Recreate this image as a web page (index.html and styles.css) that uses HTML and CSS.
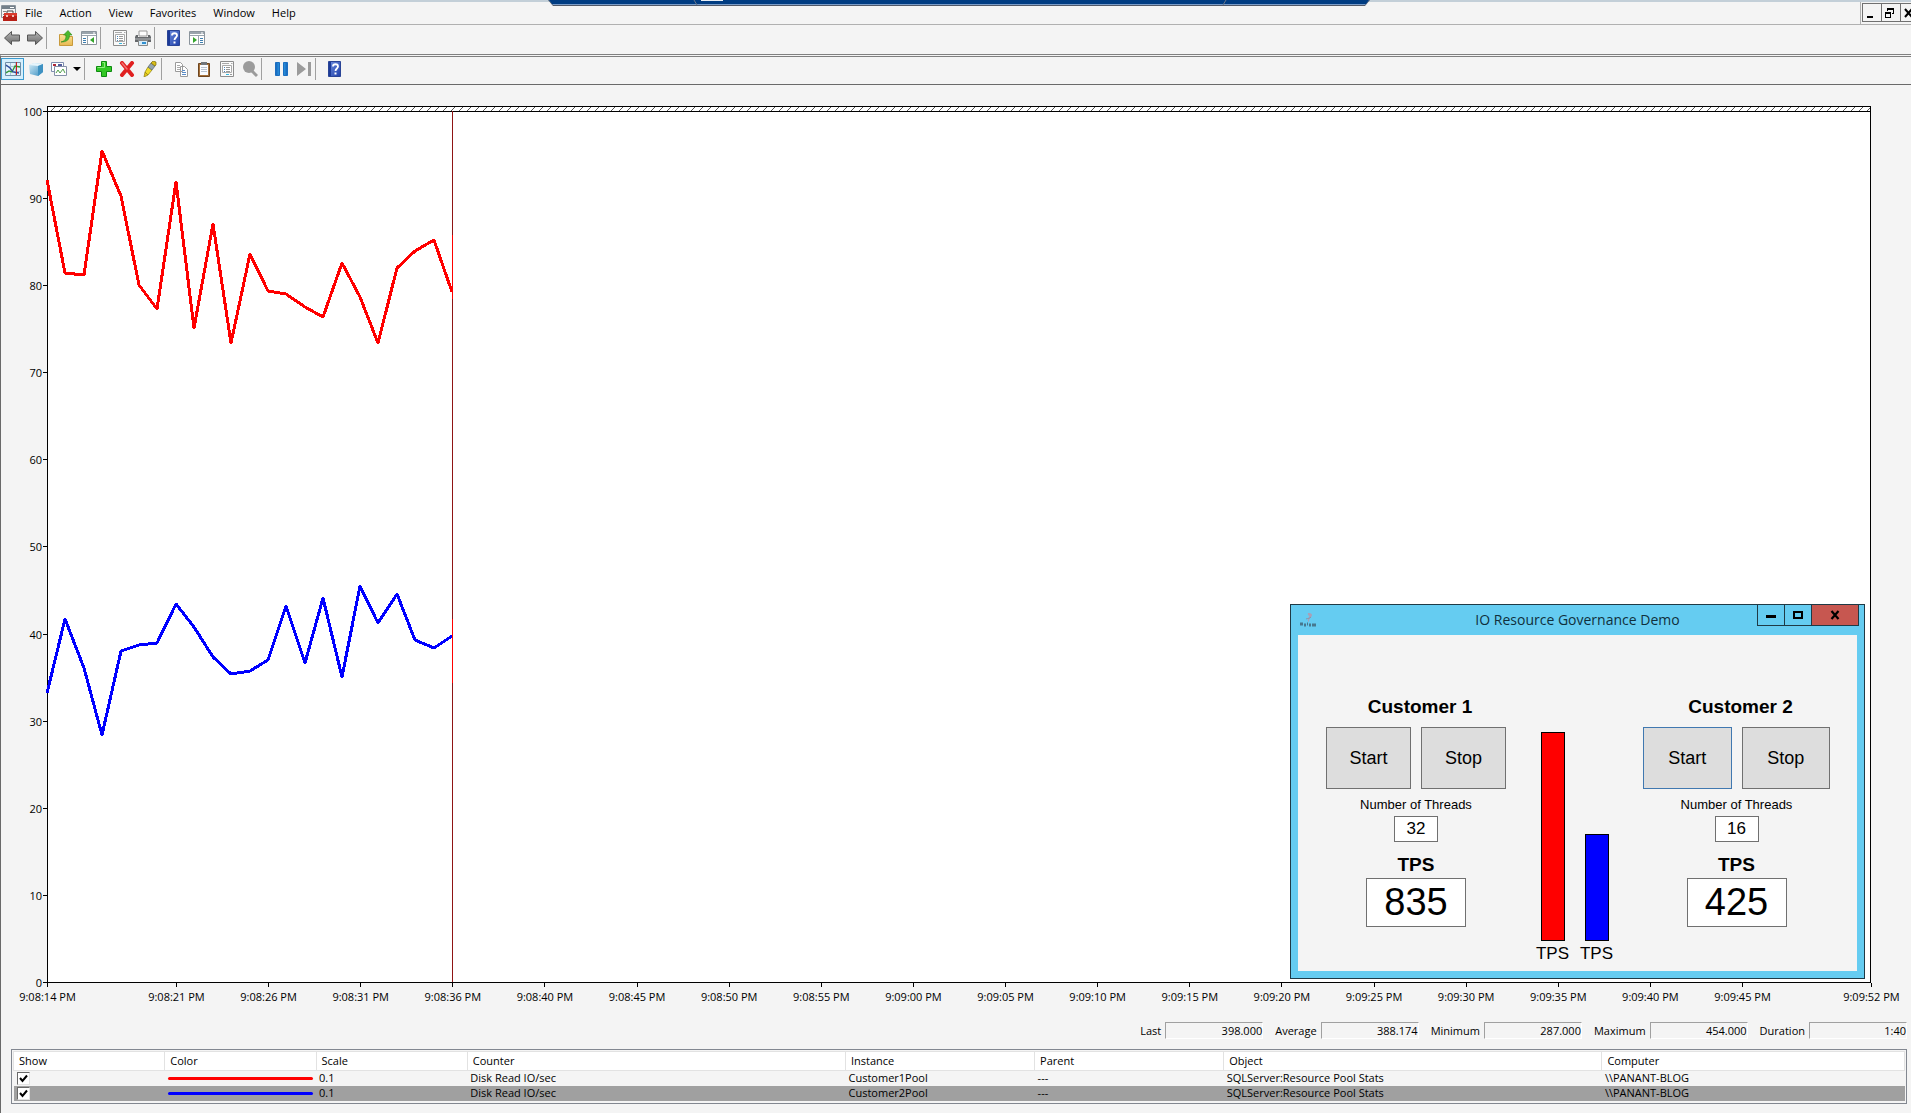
FILE: index.html
```html
<!DOCTYPE html>
<html lang="en">
<head>
<meta charset="utf-8">
<title>Performance Monitor</title>
<link rel="stylesheet" href="styles.css">
</head>
<body>
<svg class="defs" width="0" height="0" aria-hidden="true">
  <defs>
    <linearGradient id="g-grey" x1="0" y1="0" x2="0" y2="1"><stop offset="0" stop-color="#b5b5b5"/><stop offset="1" stop-color="#6a6a6a"/></linearGradient>
    <linearGradient id="g-help" x1="0" y1="0" x2="1" y2="1"><stop offset="0" stop-color="#6f8fe0"/><stop offset="1" stop-color="#1f3fa8"/></linearGradient>
    <linearGradient id="g-folder" x1="0" y1="0" x2="0" y2="1"><stop offset="0" stop-color="#fbe39a"/><stop offset="1" stop-color="#e8b850"/></linearGradient>
    <linearGradient id="g-cube" x1="0" y1="0" x2="1" y2="1"><stop offset="0" stop-color="#d5edf8"/><stop offset="1" stop-color="#3a8fc0"/></linearGradient>
    <linearGradient id="g-pause" x1="0" y1="0" x2="1" y2="0"><stop offset="0" stop-color="#1560b8"/><stop offset=".5" stop-color="#35b4f5"/><stop offset="1" stop-color="#1560b8"/></linearGradient>
    <symbol id="i-arrow" viewBox="0 0 16 16"><path d="M.5 8 7.500 1.500V5h8v6h-8v3.500z" fill="url(#g-grey)" stroke="#555"/></symbol>
    <symbol id="i-help" viewBox="0 0 16 16"><path d="M1.500.5h12v15h-12z" fill="url(#g-help)" stroke="#2a4496"/><path d="M2 1h2v14H2z" fill="#1c3a98"/><path d="M6 5.500C6 2.500 11 2.500 11 5.500 11 7.500 8.500 7.500 8.500 10" fill="none" stroke="#fff" stroke-width="1.800"/><path d="M7.500 11.500h2v2h-2z" fill="#fff"/></symbol>
    <symbol id="i-props" viewBox="0 0 16 16"><path d="M1.500.5h13v15h-13z" fill="#fafafa" stroke="#8d8d8d"/><path d="M3 2.500h7M12 2.500h1.500" stroke="#aaa"/><path d="M3.500 4.500h9v7h-9z" fill="#fff" stroke="#aaa"/><path d="M5 6.500h1M5 8.500h1M5 10.500h1" stroke="#4a83b8"/><path d="M7 6.500h4M7 8.500h4M7 10.500h4" stroke="#999"/><path d="M7 13.500h3" stroke="#35b8e0"/><path d="M11 13.500h2" stroke="#999"/></symbol>
    <symbol id="i-pane" viewBox="0 0 16 16"><path d="M.5 1.500h15v13H.5z" fill="#fff" stroke="#8b949c"/><path d="M1 2h14v2H1z" fill="#9aa4ac"/><path d="M12 3h2" stroke="#fff"/><path d="M1 5.500h14M6.500 6v8" stroke="#9aa4ac"/><path d="M2 8.500h3M2 10.500h3M2 12.500h3" stroke="#3e7fb0"/><path d="M13 7v6L9 10z" fill="#35a52c"/></symbol>
    <symbol id="i-pane-right" viewBox="0 0 16 16"><path d="M.5 1.500h15v13H.5z" fill="#fff" stroke="#8b949c"/><path d="M1 2h14v2H1z" fill="#9aa4ac"/><path d="M12 3h2" stroke="#fff"/><path d="M1 5.500h14M9.500 6v8" stroke="#9aa4ac"/><path d="M11 8.500h3M11 10.500h3M11 12.500h3" stroke="#3e7fb0"/><path d="M4 7v6l4-3z" fill="#35a52c"/></symbol>
  </defs>
</svg>

<svg class="session-bar" viewBox="0 0 822 6" aria-hidden="true">
  <path d="M0 0h822l-5 6H5z" fill="#505868"/>
  <path d="M1 0h820l-4 5H5z" fill="#7a9cc8"/>
  <path d="M1 0h820l-3 4H4z" fill="#003c82"/>
  <path d="m146 0 3 5M678 0l-3 5" stroke="#6b7686"/>
  <path d="M153 0h22v1h-22z" fill="#e8eef5"/>
</svg>

<header class="menubar">
  <svg class="icon" viewBox="0 0 16 16" aria-hidden="true"><path d="M.5.500h14v12H.5z" fill="#f4f4f4" stroke="#8b949c"/><path d="M1 1h13v3H1z" fill="#74808a"/><path d="M9 2.500h4" stroke="#fff"/><path d="M2 6.500h3M2 9.500h2" stroke="#888"/><path d="M6 8V6h6v2" fill="none" stroke="#444"/><path d="M3 8h13v3H3z" fill="#d83a2c"/><path d="M2 11h14v5H2z" fill="#b81f16"/><path d="M5 10h2v2H5zM11 10h2v2h-2z" fill="#f4c0b8"/></svg>
  <nav class="menus">
    <button type="button">File</button>
    <button type="button">Action</button>
    <button type="button">View</button>
    <button type="button">Favorites</button>
    <button type="button">Window</button>
    <button type="button">Help</button>
  </nav>
  <div class="mdi">
    <button type="button" aria-label="Minimize"><svg viewBox="0 0 16 16"><path d="M4 11h6v2H4z"/></svg></button>
    <button type="button" aria-label="Restore"><svg viewBox="0 0 16 16"><path d="M5 3h7v6h-2V8h1V5H6v1H5z"/><path d="M3 7h6v6H3zm1 2v3h4V9z" fill-rule="evenodd"/></svg></button>
    <button type="button" aria-label="Close"><svg viewBox="0 0 16 16"><path d="m4 4 7 8M11 4l-7 8" stroke="#000" stroke-width="2"/></svg></button>
  </div>
</header>

<div class="toolbar toolbar-main">
  <button type="button" aria-label="Back"><svg class="icon"><use href="#i-arrow"/></svg></button>
  <button type="button" aria-label="Forward"><svg class="icon flip"><use href="#i-arrow"/></svg></button>
  <i class="sep"></i>
  <button type="button" aria-label="Up one level"><svg class="icon" viewBox="0 0 16 16"><path d="M1.500 4.500H7l1 2h6.500v9h-13z" fill="url(#g-folder)" stroke="#c89a3c"/><path d="M3 12c4-1 5-3 5-7H5.500L10 .500 14 5h-2.500c0 5-3 7-8.500 7z" fill="#4cb82c" stroke="#2e8a1c" stroke-width=".6"/></svg></button>
  <button type="button" aria-label="Show console tree"><svg class="icon"><use href="#i-pane"/></svg></button>
  <i class="sep"></i>
  <button type="button" aria-label="Properties"><svg class="icon"><use href="#i-props"/></svg></button>
  <button type="button" aria-label="Print"><svg class="icon" viewBox="0 0 16 16"><path d="M4 1h8v5H4z" fill="#fdfdfd" stroke="#999"/><path d="M1 5h2v2h10V5h2l1 2v5H0V7z" fill="#66696c"/><path d="M0 8h16v2H0z" fill="#8e9194"/><path d="M3.500 10.500h9v5h-9z" fill="#d8ecf8" stroke="#888"/><path d="M7 12h4v2H7z" fill="#2f8fd0"/></svg></button>
  <i class="sep"></i>
  <button type="button" aria-label="Help"><svg class="icon"><use href="#i-help"/></svg></button>
  <button type="button" aria-label="Show action pane"><svg class="icon"><use href="#i-pane-right"/></svg></button>
</div>

<div class="workspace">
<div class="toolbar toolbar-chart">
  <button type="button" class="selected" aria-label="View current activity"><svg class="icon" viewBox="0 0 16 16"><path d="M.5 1.500h15v13H.5z" fill="#e2f1fa" stroke="#6f8ea8"/><path d="M1 5.500h14M1 10.500h14M5.500 2v12M10.500 2v12" stroke="#a9c6da"/><path d="m1 12 3-2 3 1 3-6 5 1" fill="none" stroke="#2f9a30" stroke-width="1.300"/><path d="m1 4 4 3 3 4 6 1" fill="none" stroke="#2a4a9c" stroke-width="1.300"/><path d="M11.500 1v13" stroke="#c82020"/></svg></button>
  <button type="button" aria-label="View log data"><svg class="icon" viewBox="0 0 16 16"><path d="m1 4 5-2 9 1v8l-5 4-8-2z" fill="url(#g-cube)"/><path d="m1 4 9 1 5-2-9-1z" fill="#e6f5fc"/><path d="m10 5 5-2v8l-5 4z" fill="#3f92c2"/></svg></button>
  <button type="button" aria-label="Change graph type"><svg class="icon" viewBox="0 0 16 16"><path d="M.5 1.500h12v9H.5z" fill="#fff" stroke="#7f8fb0"/><path d="M2 3h3v2H2z" fill="#b02838"/><path d="M7 3h4v2H7z" fill="#525c9c"/><path d="M3.500 5.500h12v9h-12z" fill="#fff" stroke="#8590a8"/><path d="m5 12 2-3 2 3 3-4 2 4" fill="none" stroke="#4fa04a"/></svg></button>
  <button type="button" class="drop" aria-label="Graph types"><svg viewBox="0 0 8 4"><path d="M0 0h8L4 4z"/></svg></button>
  <i class="sep"></i>
  <button type="button" aria-label="Add"><svg class="icon" viewBox="0 0 16 16"><path d="M5.500.500h5v5h5v5h-5v5h-5v-5h-5v-5h5z" fill="#32c824" stroke="#0e8a10"/><path d="M6.500 1.500h2v5h-7" fill="none" stroke="#90ec80"/></svg></button>
  <button type="button" aria-label="Delete"><svg class="icon" viewBox="0 0 16 16"><path d="m3 2 10 12M13 2 3 14" stroke="#e02020" stroke-width="4" stroke-linecap="round"/><path d="m3 2 5 6" stroke="#f47070" stroke-width="1.500" stroke-linecap="round"/></svg></button>
  <button type="button" aria-label="Highlight"><svg class="icon" viewBox="0 0 16 16"><path d="m3 11 3 3-4 2z" fill="#e6c814" stroke="#8d7c10" stroke-width=".7"/><path d="m3 11 3-5 4 3-4 5z" fill="#f0dc28" stroke="#8d7c10" stroke-width=".7"/><path d="m6 6 3-4 4 3-3 4z" fill="#93a4ae" stroke="#55626a" stroke-width=".7"/><path d="m9 2 2-2 3 1v3l-1 1z" fill="#d8bd18" stroke="#776a10" stroke-width=".7"/></svg></button>
  <i class="sep"></i>
  <button type="button" aria-label="Copy properties"><svg class="icon" viewBox="0 0 16 16"><path d="M2.500 1.500h5l2 2v7h-7zM7.500 5.500h4l3 3v7h-7z" fill="#fff" stroke="#9a9a9a"/><path d="M4 4.500h3M4 6.500h3M4 8.500h3" stroke="#aaa"/><path d="M9 9.500h3M9 11.500h4M9 13.500h4" stroke="#5a8cc8"/></svg></button>
  <button type="button" aria-label="Paste counter list"><svg class="icon" viewBox="0 0 16 16"><path d="M2.500 2.500h11v13h-11z" fill="#a5703a" stroke="#6d4520"/><path d="M4 4h8v10H4z" fill="#fafcff"/><path d="M5 6.500h6M5 8.500h6M5 10.500h6" stroke="#b8c2d0"/><path d="M5 1h6v3H5z" fill="#70757a"/></svg></button>
  <button type="button" aria-label="Properties"><svg class="icon"><use href="#i-props"/></svg></button>
  <button type="button" aria-label="Zoom"><svg class="icon" viewBox="0 0 16 16"><circle cx="7" cy="6" r="6" fill="#9b9b9b"/><path d="m10 10 5 5" stroke="#9b9b9b" stroke-width="3"/></svg></button>
  <i class="sep"></i>
  <button type="button" aria-label="Freeze display"><svg class="icon" viewBox="0 0 16 16"><path d="M2.500 1.500h4v13h-4zM10.500 1.500h4v13h-4z" fill="url(#g-pause)" stroke="#1b6ec0"/></svg></button>
  <button type="button" aria-label="Update data"><svg class="icon" viewBox="0 0 16 16"><path d="m1 1 9 7-9 7zM12 1h3v14h-3z" fill="#9b9b9b"/></svg></button>
  <i class="sep"></i>
  <button type="button" aria-label="Help"><svg class="icon"><use href="#i-help"/></svg></button>
</div>

<main class="monitor">
  <section class="chart">
    <div class="y-axis"><span>100</span><span>90</span><span>80</span><span>70</span><span>60</span><span>50</span><span>40</span><span>30</span><span>20</span><span>10</span><span>0</span></div>
    <div class="plot">
      <svg class="hatch" aria-hidden="true"><defs><pattern id="hatch" width="8" height="4" patternUnits="userSpaceOnUse"><path d="m3 4 4-4" stroke="#555"/></pattern></defs><rect width="100%" height="4" fill="url(#hatch)"/></svg>
      <svg class="lines" viewBox="1 1 1822 870" preserveAspectRatio="none" role="img" aria-label="Disk Read IO/sec for Customer1Pool and Customer2Pool">
        <path class="cursor" d="M405.500 0v871"/>
        <polyline class="series" stroke="#f00" points="0,69 18,162 37,164 55,40 74,85 92,174 110,198 129,71 147,217 166,113 184,232 203,143 221,180 239,183 258,196 276,206 295,152 313,186 331,232 350,157 368,140 387,129 405,181"/>
        <polyline class="series" stroke="#00f" points="0,582 18,508 37,557 55,624 74,540 92,534 110,532 129,493 147,516 166,546 184,563 203,560 221,549 239,495 258,552 276,487 295,566 313,475 331,512 350,483 368,529 387,537 405,525"/>
        <path class="cursor-mark" d="M405.500 124v64M405.500 508v64"/>
      </svg>
    </div>
    <div class="x-axis">
      <span>9:08:14 PM</span><span>9:08:21 PM</span><span>9:08:26 PM</span><span>9:08:31 PM</span><span>9:08:36 PM</span><span>9:08:40 PM</span><span>9:08:45 PM</span><span>9:08:50 PM</span><span>9:08:55 PM</span><span>9:09:00 PM</span><span>9:09:05 PM</span><span>9:09:10 PM</span><span>9:09:15 PM</span><span>9:09:20 PM</span><span>9:09:25 PM</span><span>9:09:30 PM</span><span>9:09:35 PM</span><span>9:09:40 PM</span><span>9:09:45 PM</span><span>9:09:52 PM</span>
    </div>
  </section>

  <dl class="stats">
    <div><dt>Last</dt><dd>398.000</dd></div>
    <div><dt>Average</dt><dd>388.174</dd></div>
    <div><dt>Minimum</dt><dd>287.000</dd></div>
    <div><dt>Maximum</dt><dd>454.000</dd></div>
    <div><dt>Duration</dt><dd>1:40</dd></div>
  </dl>

  <div class="legend">
    <table>
      <colgroup><col class="w8"><col class="w8"><col class="w8"><col class="w20"><col class="w10"><col class="w10"><col class="w20"><col class="w16"></colgroup>
      <thead><tr><th>Show</th><th>Color</th><th>Scale</th><th>Counter</th><th>Instance</th><th>Parent</th><th>Object</th><th>Computer</th></tr></thead>
      <tbody>
        <tr><td><input type="checkbox" checked aria-label="Show Customer1Pool"></td><td><i class="swatch red"></i></td><td>0.1</td><td>Disk Read IO/sec</td><td>Customer1Pool</td><td>---</td><td>SQLServer:Resource Pool Stats</td><td>\\PANANT-BLOG</td></tr>
        <tr class="current"><td><input type="checkbox" checked aria-label="Show Customer2Pool"></td><td><i class="swatch blue"></i></td><td>0.1</td><td>Disk Read IO/sec</td><td>Customer2Pool</td><td>---</td><td>SQLServer:Resource Pool Stats</td><td>\\PANANT-BLOG</td></tr>
      </tbody>
    </table>
  </div>
</main>
</div>

<section class="dialog" role="dialog" aria-labelledby="dialog-title">
  <header class="titlebar">
    <svg class="icon" viewBox="0 0 16 16" aria-hidden="true"><path d="M8 1c4 0 5 2 3 4s-2 3-2 5c-2-1-1-4 0-5S7 3 8 1z" fill="#a9a0b8"/><path d="M6 7c2-1 3 0 5-2" fill="none" stroke="#8a93a8"/><path d="M0 12h3M4 13h2M7 12h1M9 13h2M12 13h4" stroke="#47788f" stroke-width="3"/></svg>
    <h1 id="dialog-title">IO Resource Governance Demo</h1>
    <div class="caption">
      <button type="button" aria-label="Minimize"><svg viewBox="0 0 16 16"><path d="M3 8h10v3H3z"/></svg></button>
      <button type="button" aria-label="Maximize"><svg viewBox="0 0 16 16"><path d="M3 4h10v8H3zm2 2v4h6V6z" fill-rule="evenodd"/></svg></button>
      <button type="button" class="close" aria-label="Close"><svg viewBox="0 0 16 16"><path d="m4.500 4 7 8M11.500 4l-7 8" stroke="#000" stroke-width="2.200"/></svg></button>
    </div>
  </header>
  <div class="client">
    <section class="customer first">
      <h2 class="name">Customer 1</h2>
      <div class="actions"><button type="button">Start</button><button type="button">Stop</button></div>
      <label class="threads-label" for="threads-1">Number of Threads</label>
      <input class="threads" id="threads-1" value="32">
      <label class="tps-label" for="tps-1">TPS</label>
      <input class="tps" id="tps-1" value="835" readonly>
    </section>
    <div class="bars">
      <div class="bar"><i class="red" style="height:209px"></i><span>TPS</span></div>
      <div class="bar"><i class="blue" style="height:107px"></i><span>TPS</span></div>
    </div>
    <section class="customer second">
      <h2 class="name">Customer 2</h2>
      <div class="actions"><button type="button" class="focused">Start</button><button type="button">Stop</button></div>
      <label class="threads-label" for="threads-2">Number of Threads</label>
      <input class="threads" id="threads-2" value="16">
      <label class="tps-label" for="tps-2">TPS</label>
      <input class="tps" id="tps-2" value="425" readonly>
    </section>
  </div>
</section>
</body>
</html>
```
FILE: styles.css
```css
* { box-sizing: border-box; }
body {
  margin: 0;
  min-height: 100vh;
  display: flex;
  flex-direction: column;
  position: relative;
  overflow-x: hidden;
  background: #f4f4f4;
  color: #000;
  font: 11px/15px "Open Sans", "Noto Sans", sans-serif;
}
button { margin: 0; padding: 0; border: 0; background: none; color: inherit; font: inherit; }
svg { display: block; }
.defs { position: absolute; }
.icon { width: 16px; height: 16px; flex: none; }
.flip { transform: scaleX(-1); }
.red { background: #f00; }
.blue { background: #00f; }

/* remote session tab hanging over the top edge */
.session-bar { position: absolute; top: 0; left: 50%; width: 822px; height: 6px; margin-left: -408px; z-index: 2; }

/* menu bar */
.menubar { display: flex; align-items: center; height: 25px; border-top: 2px solid #c3cfd8; border-bottom: 1px solid #b0b0b0; padding-left: 1px; }
.menus { display: flex; flex: 1; gap: 17px; padding: 0 0 2px 8px; align-self: stretch; border-right: 1px solid #b0b0b0; }
.mdi { display: flex; align-self: flex-start; height: 20px; width: 49px; margin-left: 1px; padding-top: 1px; overflow: hidden; }
.mdi button { flex: none; width: 20px; height: 19px; margin-right: -1px; border: 1px solid #707070; }
.mdi svg { width: 16px; height: 16px; }

/* toolbars */
.toolbar { display: flex; align-items: center; }
.toolbar button { width: 23px; height: 22px; display: grid; place-items: center; flex: none; }
.toolbar .drop { width: 14px; }
.drop svg { width: 8px; height: 4px; }
.toolbar .selected { border: 1px solid #3c9bd0; background: #d5effc; }
.toolbar .sep { width: 1px; height: 22px; margin-right: 7px; background: #a0a0a0; }
.toolbar-main { height: 29px; padding-bottom: 4px; }
.toolbar-chart { height: 28px; padding-bottom: 3px; border-bottom: 1px solid #696969; }

.workspace { flex: 1; display: flex; flex-direction: column; border-top: 3px double #808080; border-left: 1px solid #696969; }
.monitor { flex: 1; display: flex; flex-direction: column; padding: 21px 4px 9px 10px; }

/* graph */
.chart { flex: 1; display: grid; grid-template: 1fr auto / 36px 1fr; padding-right: 36px; }
.y-axis { display: flex; flex-direction: column; justify-content: space-between; padding-top: 5px; }
.y-axis span { height: 1px; display: flex; align-items: center; justify-content: flex-end; gap: 1px; }
.y-axis span::after { content: ""; width: 4px; height: 1px; background: #000; }
.plot { display: flex; flex-direction: column; border: 1px solid #000; background: #fff; }
.hatch { width: 100%; height: 5px; border-bottom: 1px solid #000; }
.lines { flex: 1; width: 100%; min-height: 0; height: 0; overflow: visible; shape-rendering: crispEdges; }
.series { fill: none; stroke-width: 3; stroke-linejoin: round; }
.cursor { stroke: #8f1414; }
.cursor-mark { stroke: #f00; }
.x-axis { grid-column: 2; display: grid; grid-template-columns: 7fr repeat(17, 5fr) 7fr 0; white-space: nowrap; }
.x-axis span { justify-self: start; width: 81px; margin-left: -40px; text-align: center; }
.x-axis span::before { content: ""; display: block; width: 1px; height: 4px; margin: 0 auto 2px; background: #000; }

/* summary values */
.stats { display: flex; justify-content: flex-end; gap: 12px; margin: 18px 0 10px; }
.stats div { display: flex; gap: 4px; align-items: center; }
.stats dd { width: 98px; height: 17px; margin: 0; border: 1px solid; border-color: #a0a0a0 #fff #fff #a0a0a0; line-height: 16px; text-align: right; }

/* counter list */
.legend { border: 1px solid #828790; padding: 1px; height: 55px; }
table { width: 100%; border-collapse: collapse; table-layout: fixed; }
.w8 { width: 8%; }
.w10 { width: 10%; }
.w16 { width: 16%; }
.w20 { width: 20%; }
th { height: 19px; padding: 0 5px; border: 1px solid #e2e2e2; background: #fff; font-weight: 400; text-align: left; line-height: 16px; }
td { height: 15px; padding: 0 3px; line-height: 14px; white-space: nowrap; }
.current { background: #a0a0a0; }
td input { appearance: none; display: block; width: 13px; height: 13px; margin: 0; border: 1px solid; border-color: #696969 #e3e3e3 #e3e3e3 #696969; background: #fff; }
td input:checked { background: #fff url("data:image/svg+xml,%3Csvg xmlns='http://www.w3.org/2000/svg' viewBox='0 0 11 11'%3E%3Cpath d='M2 5l2.500 3L9 2.500' fill='none' stroke='%23000' stroke-width='2'/%3E%3C/svg%3E") center / 11px; }
.swatch { display: block; height: 3px; border-radius: 2px; }

/* demo window floating over the graph */
.dialog { position: absolute; right: 46px; bottom: 134px; width: 575px; padding: 0 7px 7px; border: 1px solid #1f3a46; background: #65ccf1; font-family: "Liberation Sans", Arial, sans-serif; }
.titlebar { display: flex; align-items: flex-start; height: 30px; margin-right: -2px; padding-left: 2px; }
.titlebar .icon { margin-top: 7px; }
.titlebar h1 { flex: 1; margin: 0; padding: 4px 0 0 82px; color: #10303c; font: 14px/22px "Open Sans", "Noto Sans", sans-serif; text-align: center; white-space: nowrap; }
.caption { display: flex; height: 21px; border: 1px solid #1f3a46; border-top: 0; }
.caption button { display: grid; place-items: center; width: 27px; border-right: 1px solid #1f3a46; }
.caption .close { width: 46px; border-right: 0; background: #c75750; }
.caption svg { width: 16px; height: 16px; }
.client { display: flex; justify-content: space-between; height: 336px; padding: 61px 27px 0 28px; background: #f4f4f4; }
.customer { display: flex; flex-direction: column; align-items: center; }
.first { width: 180px; }
.second { width: 187px; }
.name { margin: 0 0 9px; padding-left: 8px; font-size: 19px; line-height: 22px; }
.actions { display: flex; gap: 10px; align-self: stretch; margin-bottom: 8px; }
.actions button { flex: 1; height: 62px; border: 1px solid #707070; background: #ddd; font-size: 18px; }
.actions .focused { border-color: #4078b0; }
.threads-label { margin-bottom: 3px; font-size: 13px; line-height: 16px; }
.threads, .tps { border: 1px solid #707070; background: #fff; padding: 0; font-family: inherit; text-align: center; }
.threads { width: 44px; height: 26px; margin-bottom: 12px; font-size: 17px; }
.tps-label { margin-bottom: 2px; font-size: 19px; font-weight: 700; line-height: 22px; }
.tps { width: 100px; height: 49px; font-size: 38px; }
.bars { display: flex; align-items: flex-end; gap: 10px; padding-bottom: 7px; }
.bar { display: flex; flex-direction: column; align-items: center; width: 34px; gap: 3px; font-size: 17px; line-height: 20px; }
.bar i { width: 24px; border: 1px solid #000; }
```
